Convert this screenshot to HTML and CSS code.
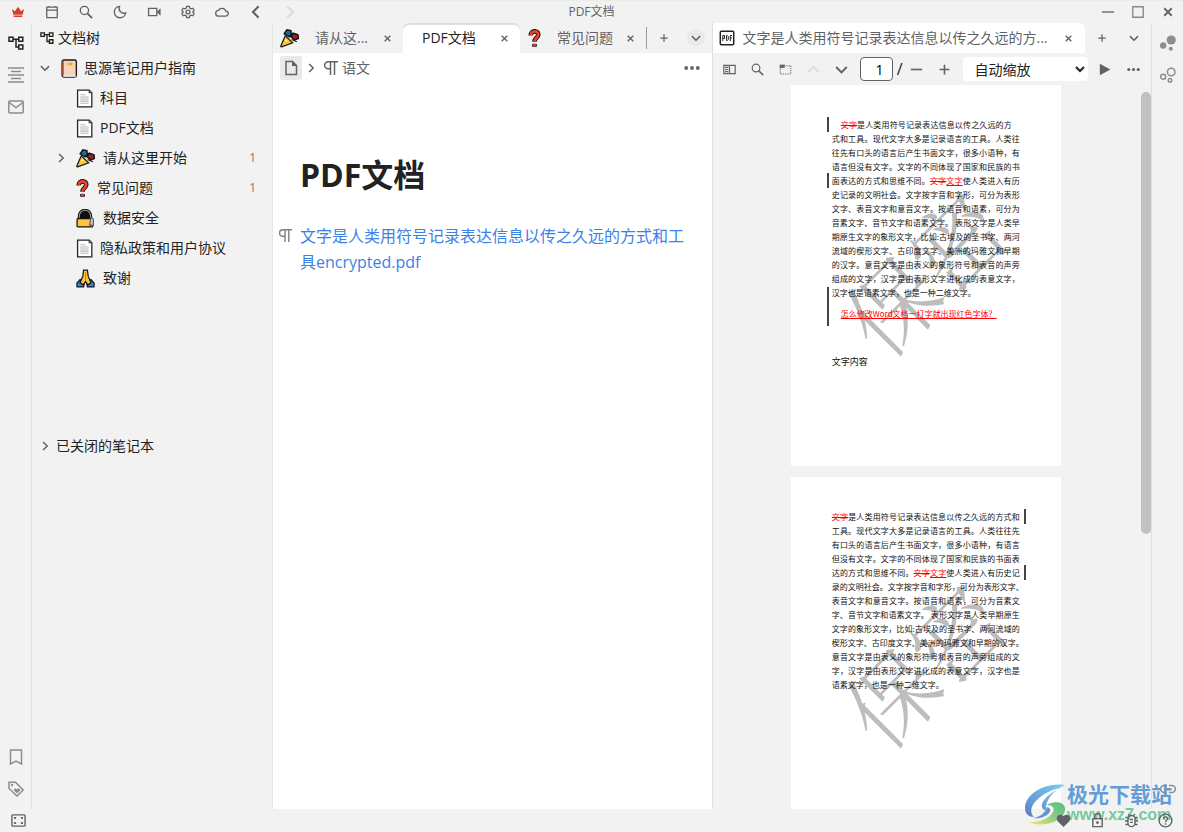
FILE: index.html
```html
<!DOCTYPE html>
<html lang="zh-CN">
<head>
<meta charset="utf-8">
<title>PDF文档</title>
<link rel="stylesheet" href="styles.css">
</head>
<body>
<svg class="sprite" aria-hidden="true">
  <symbol id="crown" viewBox="0 0 16 16"><path fill="#d23f31" d="M1 4.500 4.500 7 8 2l3.500 5L15 4.500 13.300 11H2.700zM3 12h10v1.800H3z"/></symbol>
  <symbol id="calendar" viewBox="0 0 16 16"><path class="line" d="M2 2.500h12v12H2zM2 5.800h12M4.500 1v2M11.500 1v2"/></symbol>
  <symbol id="search" viewBox="0 0 16 16"><circle class="line" cx="6.200" cy="6.200" r="4.700"/><path class="line bold" d="m9.500 9.500 5.500 5.500"/></symbol>
  <symbol id="moon" viewBox="0 0 16 16"><path class="line" d="M7.500 1.600A6.500 6.500 0 1 0 14.500 9 5.500 5.500 0 0 1 7.500 1.600z"/></symbol>
  <symbol id="video" viewBox="0 0 16 16"><path class="line" d="M1.800 3.800h9.400v8.400H1.800z"/><path fill="currentColor" d="m11 8 4.500-4.200v8.400z"/></symbol>
  <symbol id="gear" viewBox="0 0 16 16"><path class="line" d="m6.500 1.500h3l.5 2 1.500.8 2-.6 1.500 2.600L13.500 8l1.500 1.700-1.500 2.600-2-.6-1.500.8-.5 2h-3l-.5-2-1.500-.8-2 .6L1 9.700 2.500 8 1 6.300l1.500-2.600 2 .6L6 3.500z"/><circle class="line" cx="8" cy="8" r="2.200"/></symbol>
  <symbol id="cloud" viewBox="0 0 16 16"><path class="line" d="M4.200 12.800h7.800a2.900 2.900 0 0 0 .3-5.800A4.500 4.500 0 0 0 4 6.200a3.300 3.300 0 0 0 .2 6.600z"/></symbol>
  <symbol id="left" viewBox="0 0 16 16"><path class="line heavy" d="M11 1.500 4.500 8l6.500 6.500"/></symbol>
  <symbol id="right" viewBox="0 0 16 16"><path class="line heavy" d="m5 1.500 6.500 6.500L5 14.500"/></symbol>
  <symbol id="down" viewBox="0 0 16 16"><path class="line heavy" d="m1.500 5 6.500 6.500L14.500 5"/></symbol>
  <symbol id="up" viewBox="0 0 16 16"><path class="line heavy" d="M1.500 11 8 4.500l6.500 6.500"/></symbol>
  <symbol id="tree" viewBox="0 0 16 16"><path class="line" d="M1 2.200h4v4H1zM10.800 2.200h4v4h-4zM10.800 10h4v4h-4zM5 4.200h5.800M8 4.200V12h2.800"/></symbol>
  <symbol id="outline" viewBox="0 0 16 16"><path class="line" d="M0 1h16M3 4.500h10M0 8h16M3 11.500h10M0 15h16"/></symbol>
  <symbol id="mail" viewBox="0 0 16 16"><rect class="line" x=".8" y="2" width="14.400" height="12" rx="1"/><path class="line" d="m1 3.500 7 5 7-5"/></symbol>
  <symbol id="bookmark" viewBox="0 0 16 16"><path class="line" d="M2.500 1h11v14L8 12.200 2.500 15z"/></symbol>
  <symbol id="tag" viewBox="0 0 16 16"><path class="line" d="M1 1.200h6.500L15.200 9 9 15 1 7.500z"/><circle fill="currentColor" cx="4" cy="4" r="1.200"/><path fill="currentColor" d="M9 12.500 6 9.500c-.8-1.800 1.500-3 3-1.300 1.500-1.700 4-.5 3 1.300z"/></symbol>
  <symbol id="screen" viewBox="0 0 16 16"><rect class="line" x="1" y="2" width="14" height="12" rx="1"/><path class="line" d="M4 6.500V5h1.500M10.500 5H12v1.500M12 9.500V11h-1.500M5.500 11H4V9.500"/></symbol>
  <symbol id="close" viewBox="0 0 16 16"><path class="line heavy" d="m3 3 10 10M13 3 3 13"/></symbol>
  <symbol id="plus" viewBox="0 0 16 16"><path class="line bold" d="M8 2v12M2 8h12"/></symbol>
  <symbol id="minus" viewBox="0 0 16 16"><path class="line bold" d="M1 8h14"/></symbol>
  <symbol id="square" viewBox="0 0 16 16"><path class="line" d="M2 2h12v12H2z"/></symbol>
  <symbol id="dots" viewBox="0 0 16 16"><circle fill="currentColor" cx="2.200" cy="8" r="1.900"/><circle fill="currentColor" cx="8" cy="8" r="1.900"/><circle fill="currentColor" cx="13.800" cy="8" r="1.900"/></symbol>
  <symbol id="file" viewBox="0 0 16 16"><path class="line" d="M3 1.500h6.500l4 4v9H3z"/><path fill="currentColor" d="M9 1v5h5z"/></symbol>
  <symbol id="para" viewBox="0 0 16 16"><path class="line" d="M15 1.800H5.200a3.500 3.500 0 0 0 0 7H7M7.500 2v13M11.500 2v13"/></symbol>
  <symbol id="pdf" viewBox="0 0 16 16"><rect class="line" x="1.300" y="1.300" width="13.400" height="13.400" rx="1"/><path fill="none" stroke="currentColor" d="M3.800 11V5.500h1.700v3H4M7.500 5.500V10.500h.8l1-1V6.500l-1-1zM11.300 11V5.500H13M11.300 8H13"/></symbol>
  <symbol id="sidebar" viewBox="0 0 16 16"><path class="line" d="M1 3h14v10H1zM8 3v10M2.500 5.500h4M2.500 8h4M2.500 10.500h4"/></symbol>
  <symbol id="select-area" viewBox="0 0 16 16"><path fill="none" stroke="currentColor" stroke-width="1.300" stroke-dasharray="1.300 1.300" d="M1.500 3.500h13v10h-13z"/><path fill="currentColor" d="M1 2h6v4H1z"/></symbol>
  <symbol id="play" viewBox="0 0 16 16"><path fill="currentColor" d="M1 1 14 8 1 15z"/></symbol>
  <symbol id="graph" viewBox="0 0 16 16"><circle fill="currentColor" cx="11.200" cy="5" r="4.600"/><circle fill="currentColor" cx="3.200" cy="10.500" r="3.200"/><circle fill="currentColor" cx="10.800" cy="13.800" r="2"/></symbol>
  <symbol id="graph-local" viewBox="0 0 16 16"><circle class="line" cx="11.200" cy="5" r="3.800"/><circle class="line" cx="3.200" cy="9.800" r="2.500"/><circle class="line" cx="10" cy="13.300" r="1.800"/></symbol>
  <symbol id="link" viewBox="0 0 16 16"><path class="line" d="M7 4.500H4.200a3.500 3.500 0 0 0 0 7H7M9 4.500h2.800a3.500 3.500 0 0 1 0 7H9M5 8h6"/></symbol>
  <symbol id="heart" viewBox="0 0 16 16"><path fill="currentColor" d="M8 15 2 9C-1.500 4.500 3.500-1 8 3.300 12.500-1 17.500 4.500 14 9z"/></symbol>
  <symbol id="lock" viewBox="0 0 16 16"><path class="line" d="M3 6h10v8.500H3zM5 6V3.500a3 3 0 0 1 6 0V6"/><circle fill="currentColor" cx="8" cy="10.200" r="1.500"/></symbol>
  <symbol id="bug" viewBox="0 0 16 16"><path class="line" d="M4.200 6.500a3.800 3.800 0 0 1 7.600 0v4.200a3.800 3.800 0 0 1-7.600 0zM1.500 4.800h3M1 8.500h3M1.500 12.200h3M14.500 4.800h-3M15 8.500h-3M14.500 12.200h-3M6.500 7h3M6.500 10h3M4.500 1 6 3M11.500 1 10 3"/></symbol>
  <symbol id="help" viewBox="0 0 16 16"><circle class="line" cx="8" cy="8" r="6.800"/><path class="line" d="M5.800 6.200c.2-3 4.600-2.600 4.400 0C10.100 7.700 8 7.900 8 9.800M8 11v1.600"/></symbol>

  <symbol id="notebook" viewBox="0 0 18 18"><rect x="2" y="1" width="13.500" height="16" rx="1.500" fill="#f7d3bd" stroke="#1c1c1c" stroke-width="1.300"/><path d="M2.500 2v14" stroke="#9b4f2c" stroke-width="2"/><path d="M3 16.300h12" stroke="#fff"/><rect x="7" y="3.500" width="5" height="2.500" rx="1" fill="#e3b515"/></symbol>
  <symbol id="page" viewBox="0 0 18 18"><path d="M1.500 1h11l2.500 2.500V17H1.500z" fill="#fff" stroke="#222" stroke-width="1.200"/><path d="M12.500 1v2.500H15" fill="#888" stroke="#333"/><path d="M4 5.500h5M4 7.500h8M4 9.500h8M4 11.500h8M4 13.500h8" stroke="#b6b6b6"/></symbol>
  <symbol id="party" viewBox="0 0 18 18"><path d="M5 6.500 12 13 1.500 17c-.8 0-.9-.5-.6-1.200z" fill="#fcc63c" stroke="#181818" stroke-width="1.200"/><path d="M4 4.500 6.500.8l3.800.7.500 4-2.500 1.800z" fill="#17708c" stroke="#101820" stroke-width="1.400"/><path d="m10.500 7.500 2-3.500 4.500 1.500.5 3.500-3.500 1.300z" fill="#8f2927" stroke="#181014" stroke-width="1.400"/><circle cx="6" cy="11" r="1" fill="#fff1a1"/><path d="m9 8 3-4M11 10l5 2" stroke="#111"/></symbol>
  <symbol id="question" viewBox="0 0 12 18"><path d="M2.500 6C2.300 1 9.700 1 9.500 5.500 9.400 8.500 6 8.500 6 12M6 14.300v2.500" fill="none" stroke="#181414" stroke-width="4.400"/><path d="M2.500 6C2.300 1 9.700 1 9.500 5.500 9.400 8.500 6 8.500 6 12M6 13.800v2.400" fill="none" stroke="#e9432b" stroke-width="2.600"/></symbol>
  <symbol id="padlock" viewBox="0 0 18 18"><path d="M3 9V6.500a5.500 5.500 0 0 1 11 0V9" fill="#0c0c0c" stroke="#111" stroke-width="2.600"/><path d="M3.200 9V6.500a5.300 5.300 0 0 1 10.600 0V9" fill="none" stroke="#a2a2a2"/><rect x="1" y="9" width="15" height="8" rx="1" fill="#fbc43a" stroke="#151515" stroke-width="1.200"/><path d="M14 8.500a2 2 0 0 1 2.500 2V15l-2 1.500L13 15z" fill="#c9c9c9" stroke="#555"/><path d="M13 15.500h2" stroke="#c3202f" stroke-width="1.500"/></symbol>
  <symbol id="pray" viewBox="0 0 18 18"><path d="m3.800 10 4.200 3-.8 4H1L.8 13.500zM14.200 10 10 13l.8 4H17l.2-3.500z" fill="#3988d4" stroke="#181818" stroke-width="1.200"/><path d="M7.200 1h3.600l.8 6 2.600 6-3 2L9 12l-2.200 3-3-2 2.600-6z" fill="#fcc345" stroke="#181818" stroke-width="1.200"/><path d="M9 3v8" stroke="#c98722"/></symbol>
</svg>

<header class="titlebar">
  <nav class="title-tools">
    <button aria-label="会员"><svg><use href="#crown"/></svg></button>
    <button aria-label="日记"><svg><use href="#calendar"/></svg></button>
    <button aria-label="搜索"><svg><use href="#search"/></svg></button>
    <button aria-label="外观"><svg><use href="#moon"/></svg></button>
    <button aria-label="录制"><svg><use href="#video"/></svg></button>
    <button aria-label="设置"><svg><use href="#gear"/></svg></button>
    <button aria-label="云端"><svg><use href="#cloud"/></svg></button>
    <button aria-label="后退"><svg><use href="#left"/></svg></button>
    <button aria-label="前进" class="disabled"><svg><use href="#right"/></svg></button>
  </nav>
  <div class="window-title">PDF文档</div>
  <div class="window-controls">
    <button aria-label="最小化"><svg><use href="#minus"/></svg></button>
    <button aria-label="最大化"><svg><use href="#square"/></svg></button>
    <button aria-label="关闭"><svg class="small"><use href="#close"/></svg></button>
  </div>
</header>

<main class="workspace">
  <aside class="dock dock-left">
    <button class="current" aria-label="文档树"><svg><use href="#tree"/></svg></button>
    <button aria-label="大纲"><svg><use href="#outline"/></svg></button>
    <button aria-label="收集箱"><svg><use href="#mail"/></svg></button>
    <span class="spacer"></span>
    <button aria-label="书签"><svg><use href="#bookmark"/></svg></button>
    <button aria-label="标签"><svg><use href="#tag"/></svg></button>
  </aside>

  <section class="file-panel">
    <h2 class="panel-title"><svg><use href="#tree"/></svg>文档树</h2>
    <ul class="tree">
      <li class="row root"><svg class="arrow"><use href="#down"/></svg><svg class="emoji"><use href="#notebook"/></svg><span class="name near">思源笔记用户指南</span></li>
      <li class="row"><svg class="emoji"><use href="#page"/></svg><span class="name near">科目</span></li>
      <li class="row"><svg class="emoji"><use href="#page"/></svg><span class="name near">PDF文档</span></li>
      <li class="row expandable"><svg class="arrow"><use href="#right"/></svg><svg class="emoji"><use href="#party"/></svg><span class="name">请从这里开始</span><span class="count">1</span></li>
      <li class="row"><svg class="emoji narrow"><use href="#question"/></svg><span class="name">常见问题</span><span class="count">1</span></li>
      <li class="row"><svg class="emoji"><use href="#padlock"/></svg><span class="name">数据安全</span></li>
      <li class="row"><svg class="emoji"><use href="#page"/></svg><span class="name near">隐私政策和用户协议</span></li>
      <li class="row"><svg class="emoji"><use href="#pray"/></svg><span class="name">致谢</span></li>
    </ul>
    <div class="row closed"><svg class="arrow"><use href="#right"/></svg><span>已关闭的笔记本</span></div>
  </section>

  <section class="pane editor">
    <div class="tabs">
      <div class="tab"><svg class="emoji"><use href="#party"/></svg><span class="tab-name">请从这...</span><button aria-label="关闭"><svg><use href="#close"/></svg></button></div>
      <div class="tab active"><span class="tab-name">PDF文档</span><button aria-label="关闭"><svg><use href="#close"/></svg></button></div>
      <div class="tab"><svg class="emoji narrow"><use href="#question"/></svg><span class="tab-name">常见问题</span><button aria-label="关闭"><svg><use href="#close"/></svg></button></div>
      <div class="tab-actions divided">
        <button aria-label="新建"><svg><use href="#plus"/></svg></button>
        <button aria-label="更多" class="round"><svg><use href="#down"/></svg></button>
      </div>
    </div>
    <div class="breadcrumb">
      <button class="doc-button" aria-label="文档"><svg><use href="#file"/></svg></button>
      <svg class="sep"><use href="#right"/></svg>
      <svg><use href="#para"/></svg>
      <span>语文</span>
      <button class="more" aria-label="更多"><svg><use href="#dots"/></svg></button>
    </div>
    <article class="document">
      <h1>PDF文档</h1>
      <div class="block"><svg><use href="#para"/></svg><a href="#encrypted">文字是人类用符号记录表达信息以传之久远的方式和工具encrypted.pdf</a></div>
    </article>
  </section>

  <section class="pane reader">
    <div class="tabs">
      <div class="tab active wide"><svg class="pdf-icon"><use href="#pdf"/></svg><span class="tab-name">文字是人类用符号记录表达信息以传之久远的方...</span><button aria-label="关闭"><svg><use href="#close"/></svg></button></div>
      <div class="tab-actions">
        <button aria-label="新建"><svg><use href="#plus"/></svg></button>
        <button aria-label="更多"><svg><use href="#down"/></svg></button>
      </div>
    </div>
    <div class="pdf-toolbar">
      <button aria-label="侧栏"><svg><use href="#sidebar"/></svg></button>
      <button aria-label="查找"><svg><use href="#search"/></svg></button>
      <button aria-label="矩形标注"><svg><use href="#select-area"/></svg></button>
      <button aria-label="上一页" class="disabled"><svg><use href="#up"/></svg></button>
      <button aria-label="下一页"><svg><use href="#down"/></svg></button>
      <input class="page-number" type="text" value="1" aria-label="页码">
      <span class="slash">/</span>
      <button aria-label="缩小"><svg><use href="#minus"/></svg></button>
      <button aria-label="放大"><svg><use href="#plus"/></svg></button>
      <select class="zoom" aria-label="缩放"><option>自动缩放</option></select>
      <button aria-label="演示"><svg><use href="#play"/></svg></button>
      <button aria-label="更多"><svg><use href="#dots"/></svg></button>
    </div>
    <div class="viewer">
      <div class="sheet">
        <div class="seal">保密</div>
        <p class="body-text"><span class="indent"><del>文字</del>是人类用符号记录表达信息以传之久远的方</span><br>式和工具。现代文字大多是记录语言的工具。人类往<br>往先有口头的语言后产生书面文字，很多小语种，有<br>语言但没有文字。文字的不同体现了国家和民族的书<br>面表达的方式和思维不同。<del>文字</del><ins>文字</ins>使人类进入有历<br>史记录的文明社会。文字按字音和字形，可分为表形<br>文字、表音文字和意音文字。按语音和语素，可分为<br>音素文字、音节文字和语素文字。 表形文字是人类早<br>期原生文字的象形文字，比如:古埃及的圣书字、两河<br>流域的楔形文字、古印度文字、美洲的玛雅文和早期<br>的汉字。意音文字是由表义的象形符号和表音的声旁<br>组成的文字，汉字是由表形文字进化成的表意文字，</p>
        <p class="body-end">汉字也是语素文字，也是一种二维文字。</p>
        <p class="insert-line"><ins>怎么修改Word文档一打字就出现红色字体？</ins></p>
        <p class="note">文字内容</p>
        <i class="bar first"></i><i class="bar second"></i><i class="bar third"></i>
      </div>
      <div class="sheet mirrored">
        <div class="seal">保密</div>
        <p class="body-text"><del>文字</del>是人类用符号记录表达信息以传之久远的方式和<br>工具。现代文字大多是记录语言的工具。人类往往先<br>有口头的语言后产生书面文字，很多小语种，有语言<br>但没有文字。文字的不同体现了国家和民族的书面表<br>达的方式和思维不同。<del>文字</del><ins>文字</ins>使人类进入有历史记<br>录的文明社会。文字按字音和字形，可分为表形文字、<br>表音文字和意音文字。按语音和语素，可分为音素文<br>字、音节文字和语素文字。 表形文字是人类早期原生<br>文字的象形文字，比如:古埃及的圣书字、两河流域的<br>楔形文字、古印度文字、美洲的玛雅文和早期的汉字。<br>意音文字是由表义的象形符号和表音的声旁组成的文<br>字，汉字是由表形文字进化成的表意文字，汉字也是</p>
        <p class="body-end">语素文字，也是一种二维文字。</p>
        <i class="bar first"></i><i class="bar second"></i>
      </div>
      <div class="scroll-thumb"></div>
    </div>
  </section>

  <aside class="dock dock-right">
    <button aria-label="关系图"><svg><use href="#graph"/></svg></button>
    <button aria-label="局部关系图"><svg><use href="#graph-local"/></svg></button>
    <span class="spacer"></span>
    <button aria-label="反向链接"><svg><use href="#link"/></svg></button>
  </aside>
</main>

<footer class="statusbar">
  <button aria-label="全屏"><svg><use href="#screen"/></svg></button>
  <span class="spacer"></span>
  <button aria-label="赞助"><svg><use href="#heart"/></svg></button>
  <button aria-label="锁定"><svg><use href="#lock"/></svg></button>
  <button aria-label="反馈"><svg><use href="#bug"/></svg></button>
  <button aria-label="帮助"><svg><use href="#help"/></svg></button>
</footer>

<div class="brand">
  <svg class="brand-logo" viewBox="0 0 42 42">
    <defs>
      <linearGradient id="sky" x1="0" y1="1" x2="1" y2="0"><stop offset="0" stop-color="#4169bd"/><stop offset="1" stop-color="#65c9f0"/></linearGradient>
      <linearGradient id="leaf" x1="0" y1="1" x2="1" y2="0"><stop offset="0" stop-color="#f0e94e"/><stop offset=".5" stop-color="#7cc86e"/><stop offset="1" stop-color="#39b073"/></linearGradient>
    </defs>
    <path fill="url(#sky)" d="M41 2C20-1 1 12 1 25c0 6 4 9 9 9-5-5-3-12 4-18 5-5 13-9 22-11-8 4-16 10-18 16-1 4 1 6 4 6-1-9 7-20 19-25z"/>
    <path fill="url(#leaf)" d="M4 39c12 1 22-4 25-10 2-4-1-7-6-7 5-4 17-4 18 3 1 8-9 15-19 16-7 1-13 0-18-2z"/>
    <path fill="#4b85cf" d="M9 35c7-1 12-5 14-11 4 1 4 4 2 6-3 4-10 6-16 5z"/>
  </svg>
  <div class="brand-text"><span class="brand-name">极光下载站</span><span class="brand-url">www.xz7.com</span></div>
</div>
</body>
</html>
```
FILE: styles.css
```css
* { box-sizing: border-box; }
body {
  margin: 0;
  height: 100vh;
  display: flex;
  flex-direction: column;
  overflow: hidden;
  background: #f2f2f2;
  color: #222;
  font: 14px/20px "Open Sans", "Noto Sans CJK SC", sans-serif;
}
.sprite { position: absolute; width: 0; height: 0; }
svg { width: 16px; height: 16px; flex: none; display: block; }
.line { fill: none; stroke: currentColor; stroke-width: 1.5; }
.bold { stroke-width: 2; }
.heavy { stroke-width: 2.4; }
button {
  display: flex;
  align-items: center;
  justify-content: center;
  flex: none;
  margin: 0;
  padding: 0;
  border: 0;
  background: none;
  color: #5f6368;
}
.disabled { color: #dcdcdc; }
.spacer { flex: 1; }

.titlebar {
  display: grid;
  grid-template-columns: 1fr auto 1fr;
  align-items: center;
  height: 23px;
  flex: none;
  border-top: 1px solid #ebebeb;
}
.title-tools { display: flex; padding-left: 1px; }
.title-tools button { width: 34px; height: 22px; }
.title-tools svg { width: 14px; height: 14px; }
.window-title { font-size: 12px; color: #5f6368; }
.window-controls { display: flex; justify-content: flex-end; }
.window-controls button { width: 30px; height: 22px; color: #85888c; }
.window-controls svg { width: 14px; height: 14px; }
.window-controls svg.small { width: 12px; height: 12px; color: #5f6368; }

.workspace { display: flex; flex: 1; min-height: 0; }
.dock {
  display: flex;
  flex-direction: column;
  width: 32px;
  flex: none;
  padding: 4px 0;
}
.dock button { height: 32px; color: #8a8e92; }
.dock .current { color: #222; }
.dock-left { border-right: 1px solid #e0e0e0; }
.dock-right { border-left: 1px solid #e0e0e0; position: relative; z-index: 2; }

.file-panel { width: 241px; flex: none; border-right: 1px solid #e6e6e6; }
.panel-title {
  display: flex;
  align-items: center;
  gap: 4px;
  height: 30px;
  margin: 0;
  padding-left: 8px;
  font-size: 14px;
  font-weight: 400;
}
.panel-title svg { width: 14px; height: 14px; }
.tree { list-style: none; margin: 0; padding: 0; min-height: 378px; }
.row { display: flex; align-items: center; height: 30px; padding-left: 44px; }
.row.root { padding-left: 8px; }
.row.expandable { padding-left: 24px; }
.arrow { width: 10px; height: 10px; color: #5f6368; }
.root .emoji { margin-left: 10px; }
.expandable .emoji { margin-left: 10px; }
.emoji { width: 19px; height: 19px; }
.emoji.narrow { width: 13px; }
.name { margin-left: 8px; }
.name.near { margin-left: 5px; }
.count { margin-left: auto; margin-right: 16px; font-size: 12px; color: #a07058; }
.row.closed { padding-left: 8px; gap: 6px; }

.pane { display: flex; flex-direction: column; flex: 1; min-width: 0; }
.editor { background: #fff; border-right: 1px solid #e0e0e0; }
.tabs { display: flex; height: 30px; flex: none; background: #f2f2f2; }
.tab {
  display: flex;
  align-items: center;
  flex: none;
  width: 126px;
  padding: 0 8px;
  color: #5f6368;
}
.tab-name { flex: 1; padding-left: 16px; white-space: nowrap; }
.tab button { width: 16px; height: 16px; }
.tab button svg { width: 9px; height: 9px; }
.editor .tab:first-child { width: 130px; padding-left: 7px; }
.editor .active {
  width: 117px;
  background: #fff;
  box-shadow: inset 0 2px #dedede;
  border-radius: 6px 6px 0 0;
  color: #222;
}
.editor .active .tab-name { padding-left: 11px; }
.tab-actions { display: flex; flex: 1; align-items: center; }
.divided::before { content: ""; width: 1px; height: 22px; background: #999; }
.tab-actions button { width: 18px; height: 18px; margin: 0 6px 0 8px; }
.tab-actions svg { width: 10px; height: 10px; }
.tab-actions .round { border-radius: 50%; background: #eaeaea; }

.breadcrumb {
  display: flex;
  align-items: center;
  height: 30px;
  padding: 0 12px 0 7px;
  color: #5f6368;
}
.doc-button { width: 22px; height: 24px; background: #e9e9e9; border-radius: 2px; }
.breadcrumb .sep { width: 10px; height: 10px; margin: 0 7px 0 4px; }
.breadcrumb span { padding-left: 3px; }
.breadcrumb .more { margin-left: auto; }

.document { padding: 68px 24px 0 5px; }
.document h1 { margin: 0; padding-left: 22px; font-size: 32px; line-height: 48px; }
.block { display: flex; gap: 7px; margin-top: 24px; font-size: 16px; line-height: 26px; }
.block svg { margin-top: 5px; width: 15px; height: 15px; color: #808080; }
.block a { color: #3b82e8; text-decoration: none; }

.tab.wide { width: 372px; background: #fff; border-radius: 0 6px 0 0; padding: 0 8px 0 6px; }
.wide .tab-name { padding-left: 8px; }
.pdf-icon { color: #222; }
.pdf-toolbar {
  display: flex;
  align-items: center;
  height: 32px;
  padding: 0 4px 0 3px;
  flex: none;
}
.pdf-toolbar button { width: 28px; height: 24px; }
.pdf-toolbar svg { width: 13px; height: 13px; }
.page-number {
  width: 33px;
  height: 24px;
  margin-left: 4px;
  padding: 0 8px;
  border: 1px solid #5f6368;
  border-radius: 4px;
  background: #fff;
  font: inherit;
  text-align: right;
}
.slash { width: 10px; text-align: right; font-size: 16px; }
.zoom {
  flex: 1;
  height: 24px;
  margin: 0 3px 0 4px;
  padding: 0 0 0 8px;
  border: 0;
  border-radius: 4px;
  background: #fff;
  color: #222;
  font: inherit;
}

.viewer {
  position: relative;
  display: flex;
  flex-direction: column;
  align-items: center;
  gap: 11px;
  flex: 1;
  min-height: 0;
  padding-right: 12px;
  overflow: hidden;
}
.scroll-thumb {
  position: absolute;
  top: 7px;
  right: 0;
  width: 10px;
  height: 442px;
  border-radius: 5px;
  background: #c1c1c1;
}
.sheet {
  position: relative;
  width: 270px;
  height: 381px;
  flex: none;
  padding: 33px 41px;
  background: #fff;
  color: #111;
  font: 8px/14px "Noto Sans CJK SC", sans-serif;
}
.sheet p { position: relative; margin: 0; white-space: nowrap; }
.body-text { text-align: justify; text-align-last: justify; }
.indent { padding: 0 8px 0 9px; }
.sheet del, .sheet ins { color: #f00; }
.sheet .insert-line { margin-top: 7px; padding-left: 9px; }
.sheet .note { margin-top: 34px; font-size: 9px; }
.seal {
  position: absolute;
  left: 40px;
  top: 141px;
  width: 180px;
  color: #bdbdbd;
  font: 300 90px/90px "Noto Serif CJK SC", "Noto Sans CJK SC", serif;
  white-space: nowrap;
  transform: rotate(-45deg);
}
.bar { position: absolute; left: 36px; width: 2px; height: 15px; background: #444; }
.first { top: 32px; }
.second { top: 88px; }
.third { top: 202px; height: 39px; }
.mirrored .bar { left: 233px; }

.statusbar { display: flex; height: 23px; flex: none; padding: 0 1px; position: relative; z-index: 2; }
.statusbar button { width: 34px; }
.statusbar svg { width: 15px; height: 15px; }

.brand {
  position: absolute;
  right: 11px;
  bottom: 7px;
  display: flex;
  gap: 1px;
  pointer-events: none;
  opacity: .85;
}
.brand-logo { width: 42px; height: 42px; }
.brand-text { display: flex; flex-direction: column; }
.brand-name { color: #4a8fd2; font-size: 21px; line-height: 22px; font-weight: 700; }
.brand-url { color: #5fc48c; font: 700 16px/20px "Liberation Sans", sans-serif; }
```
